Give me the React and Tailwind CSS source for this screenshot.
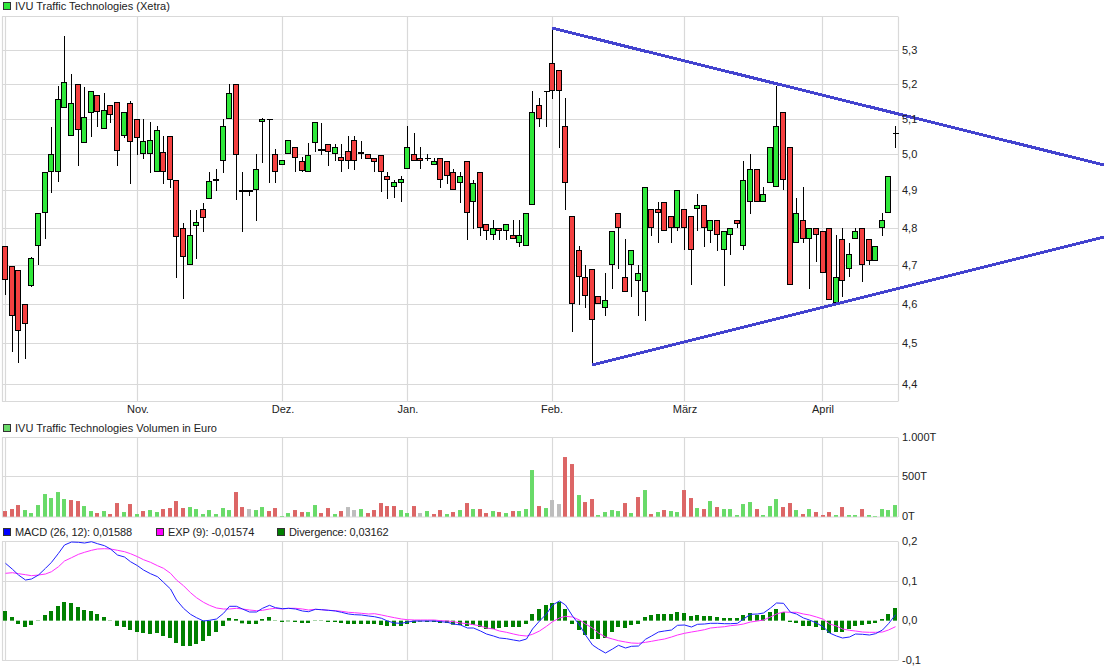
import React from 'react';

const xAt = (i) => Math.round(5 + i * 6.593);

const vGrid = [137.5, 282.5, 407.5, 552.5, 684.5, 822.5];
const months = [['Nov.', 138], ['Dez.', 283], ['Jan.', 408], ['Feb.', 552], ['März', 685], ['April', 823]];

// color, body top, body bottom, wick top, wick bottom (page pixels); d = doji with thick bar, c = thin cross
const candles = [
  ['r',246,280,246,295],['r',266,316,266,352],['r',270,331,270,363],['r',304,324,304,359],['g',258,286,257,287],
  ['g',213,246,213,265],['g',172,213,172,239],['g',154,172,127,193],['g',99,172,86,182],['g',82,108,36,108],
  ['g',103,136,74,136],['r',84,130,84,166],['g',117,143,87,143],['g',91,113,91,137],['r',95,112,95,127],
  ['g',110,129,93,129],['r',105,115,105,123],['r',102,151,102,166],['g',112,136,112,138],['r',103,142,101,184],
  ['r',119,138,119,155],['g',141,154,119,159],['g',140,154,122,173],['g',130,172,126,172],['r',152,172,136,184],
  ['r',136,180,136,188],['r',180,237,180,278],['r',228,257,223,299],['g',235,265,210,265],['g',222,226,210,259],
  ['r',209,218,203,232],['g',181,199,172,199],['g',179,181,169,191],['g',126,161,119,173],['g',93,119,84,119],
  ['r',84,155,84,200],['d',191,191,172,232],['d',191,191,191,196],['g',169,190,154,221],['g',119,122,118,163],
  ['c',119,119,119,183],['r',154,172,149,183],['g',160,165,160,165],['g',140,154,140,154],['r',147,158,147,172],
  ['r',161,171,157,172],['g',155,172,143,172],['g',122,143,122,152],['d',150,150,123,155],['r',144,152,144,166],
  ['g',147,154,144,161],['r',157,161,144,172],['r',151,161,136,169],['r',140,161,136,170],['g',152,154,141,159],
  ['r',154,159,154,159],['r',158,162,158,172],['r',155,172,155,192],['r',176,180,172,199],['g',182,187,180,198],
  ['g',179,183,176,202],['g',147,169,126,169],['r',154,161,133,161],['r',158,161,147,169],['c',158,158,154,161],
  ['g',161,165,158,165],['r',158,180,158,188],['r',161,176,161,184],['r',172,190,169,190],['g',176,183,172,203],
  ['r',161,213,161,240],['g',183,202,180,229],['r',172,228,172,236],['r',224,231,224,240],['g',228,235,220,240],
  ['r',228,231,228,240],['g',224,231,224,240],['r',235,239,220,239],['g',235,243,220,247],['g',213,246,213,246],
  ['g',112,205,91,205],['r',105,119,98,127],['c',91,91,91,127],['r',63,91,28,99],['r',70,91,70,148],
  ['r',126,183,98,210],['r',216,304,216,332],['r',250,277,246,305],['r',277,296,265,308],['r',269,320,269,365],
  ['r',296,304,296,304],['g',300,308,273,316],['g',231,265,231,289],['r',213,228,213,269],['r',277,292,239,292],
  ['g',250,265,250,297],['g',273,281,265,316],['g',187,292,187,321],['r',209,228,209,236],['r',209,213,202,243],
  ['r',202,231,202,231],['r',216,228,216,243],['g',190,228,190,231],['r',209,228,209,250],['r',216,250,216,285],
  ['g',205,209,194,231],['r',205,228,205,247],['g',220,231,220,243],['r',220,235,220,251],['g',231,250,231,286],
  ['g',228,235,228,255],['r',220,224,220,228],['g',180,246,161,250],['g',169,202,154,214],['r',169,202,169,202],
  ['g',194,202,187,202],['g',147,183,147,183],['g',126,187,86,187],['r',112,180,112,190],['r',147,285,147,285],
  ['g',213,243,198,243],['r',220,239,187,243],['g',228,239,228,289],['r',228,235,228,262],['r',231,273,231,273],
  ['r',228,300,228,300],['g',277,303,235,303],['r',239,281,228,297],['g',254,269,243,277],['g',231,239,228,239],
  ['r',228,265,228,282],['r',239,261,239,265],['g',246,261,246,261],['g',220,228,213,236],['g',176,213,176,213],
  ['c',133,133,126,148],
];

const volTops = [
  273,267,255,270,279,255,222,234,216,237,240,243,258,273,279,273,282,249,276,252,282,273,270,276,267,264,243,264,
  261,267,282,270,282,264,270,216,261,267,270,261,273,264,288,279,270,276,276,255,279,264,282,273,261,270,267,279,
  270,249,258,258,270,279,258,279,273,282,270,282,276,270,249,267,267,279,273,276,279,273,273,267,150,258,264,240,
  252,111,132,225,246,237,285,276,270,273,249,279,231,210,282,276,270,273,276,210,234,264,267,243,261,267,267,285,
  252,246,267,285,258,237,261,249,270,282,267,276,285,276,285,261,285,285,267,285,288,267,270,255,
];
const volColors =
  'rrrgggggggrrggrgrrgrgrggrrrrgggggggrrxggrrggrrggrrgrxxgr' +
  'rrrrggrxgrrgrgrgrrgrgrgggrgxxrrgrrggggrgrgrgrggrrgrgrggg' +
  'ggrgggrrgrgrrrgrggrggggg';
const volFill = { r: '#dc6666', g: '#69da69', x: '#bdbdbd' };

const divZ = [
  258,276,297,306,300,288,270,258,243,231,234,246,255,258,267,276,288,303,306,315,321,324,327,324,333,339,354,363,
  363,357,348,333,321,303,279,282,295,297,297,282,276,286,291,289,291,294,294,288,288,291,291,294,297,297,297,297,
  297,300,303,303,303,297,294,290,291,291,294,294,299,300,303,300,306,312,312,309,306,306,306,297,267,252,240,234,
  231,252,297,315,330,342,342,339,321,306,309,300,297,276,270,267,267,267,261,264,273,270,273,273,276,279,279,279,
  270,264,270,270,261,252,261,291,294,303,303,306,315,324,321,321,312,303,300,297,294,282,267,249,
];

const macdZ = [
  115,133,150,165,162,150,130,112,85,60,51,52,54,50,56,62,72,90,96,110,122,135,146,155,172,192,225,250,
  268,278,288,286,282,265,244,244,252,261,261,250,241,248,251,250,252,258,260,253,254,256,258,262,267,269,270,273,
  275,280,288,294,295,291,288,288,288,288,290,292,297,300,309,309,318,327,333,339,341,345,348,342,312,288,267,240,
  228,240,273,300,330,360,372,384,372,361,369,364,363,343,333,321,318,315,301,300,306,298,297,295,295,296,296,295,
  282,268,267,264,249,234,235,262,267,279,285,294,306,324,333,339,336,327,328,330,326,315,296,269,
];

const expZ = [
  145,143,146,149,152,150,147,140,125,108,98,88,82,76,72,71,72,76,80,86,95,104,112,122,130,145,165,182,
  203,218,232,241,249,252,252,250,252,255,257,256,252,250,252,250,250,252,255,253,254,256,257,259,262,263,265,267,
  266,270,274,278,282,284,285,285,285,285,287,288,290,294,296,299,303,309,312,318,322,327,331,333,328,318,304,290,
  279,274,276,285,297,309,324,336,342,347,351,354,355,352,349,345,342,336,330,325,321,318,314,309,307,305,302,300,
  297,291,288,285,276,267,261,262,262,267,270,276,283,297,303,312,316,318,321,322,322,321,315,305,
];

const zToY = (z) => 525 + z / 3;
const toPoints = (list) => list.map((z, i) => `${xAt(i) + 0.5},${zToY(z).toFixed(1)}`).join(' ');

function Grid({ top, bottom, rows }) {
  return (
    <g stroke="#d9d9d9" strokeWidth="1.2">
      {rows.map((y) => (
        <line key={y} x1="2" x2="898" y1={y + 0.5} y2={y + 0.5} />
      ))}
      {[2.5, 5.5, ...vGrid, 898.5].map((x) => (
        <line key={x} x1={x} x2={x} y1={top} y2={bottom} />
      ))}
      <line x1="2" x2="898" y1={top} y2={top} />
      <line x1="2" x2="898" y1={bottom} y2={bottom} />
    </g>
  );
}

function AxisLabels({ labels }) {
  return (
    <g fontSize="11" fill="#222">
      {labels.map(([text, y]) => (
        <text key={text} x="902" y={y + 4}>{text}</text>
      ))}
    </g>
  );
}

function Candle({ data, x }) {
  const [kind, top, bottom, wickTop, wickBottom] = data;
  const fill = kind === 'r' ? '#f44040' : '#2fe83a';
  return (
    <g>
      <line x1={x + 0.5} x2={x + 0.5} y1={wickTop} y2={wickBottom} stroke="#000" />
      {kind === 'd' && <rect x={x - 3} y={top - 1} width="7" height="2" fill="#000" />}
      {kind === 'c' && <rect x={x - 2} y={top} width="6" height="1" fill="#000" />}
      {(kind === 'r' || kind === 'g') && (
        <rect x={x - 2.5} y={top + 0.5} width="5" height={Math.max(bottom - top - 1, 1)} fill={fill} stroke="#000" />
      )}
    </g>
  );
}

function PriceChart() {
  const rows = [50, 84, 119, 154, 190, 228, 265, 304, 343, 384];
  const labels = ['5,3', '5,2', '5,1', '5,0', '4,9', '4,8', '4,7', '4,6', '4,5', '4,4'];
  return (
    <svg className="block" width="1104" height="404" viewBox="0 16 1104 404">
      <Grid top={16.5} bottom={401.5} rows={rows} />
      {candles.map((c, i) => (
        <Candle key={i} data={c} x={xAt(i)} />
      ))}
      <g stroke="#4343cf" strokeWidth="3" shapeRendering="crispEdges">
        <line x1="552" y1="28" x2="1104" y2="165" />
        <line x1="592" y1="365" x2="1104" y2="237" />
      </g>
      <AxisLabels labels={labels.map((t, i) => [t, rows[i]])} />
      <g fontSize="11" fill="#222" textAnchor="middle">
        {months.map(([m, x]) => (
          <text key={m} x={x} y="413">{m}</text>
        ))}
      </g>
    </svg>
  );
}

function VolumeChart() {
  return (
    <svg className="block overflow-visible" width="1104" height="88" viewBox="0 436 1104 88">
      <Grid top={437.5} bottom={517} rows={[476]} />
      {volTops.map((z, i) => {
        const h = (290 - z) / 3;
        return <rect key={i} x={xAt(i) - 2} y={516.7 - h} width="4" height={h} fill={volFill[volColors[i]]} />;
      })}
      <AxisLabels labels={[['1.000T', 437], ['500T', 476], ['0T', 516]]} />
    </svg>
  );
}

function MacdChart() {
  return (
    <svg className="block overflow-visible" width="1104" height="130" viewBox="0 540 1104 130">
      <Grid top={541.5} bottom={660.5} rows={[581]} />
      {divZ.map((z, i) => {
        const a = zToY(Math.min(z, 287));
        const b = zToY(Math.max(z, 287));
        return <rect key={i} x={xAt(i) - 2} y={a} width="4" height={b - a} fill="#008000" />;
      })}
      <polyline points={toPoints(expZ)} fill="none" stroke="#ff2eff" strokeWidth="1" />
      <polyline points={toPoints(macdZ)} fill="none" stroke="#2020ff" strokeWidth="1" />
      <AxisLabels labels={[['0,2', 541], ['0,1', 581], ['0,0', 620], ['-0,1', 660]]} />
    </svg>
  );
}

function LegendItem({ swatch, className, children }) {
  return (
    <div className={`flex items-center gap-1 ${className || ''}`}>
      <span className={`w-2 h-2 border border-[#333] ${swatch}`} />
      <span>{children}</span>
    </div>
  );
}

export default function App() {
  return (
    <div className="w-[1104px] h-[670px] bg-white overflow-hidden text-[11px] leading-none text-[#222] font-['Liberation_Sans',Arial,sans-serif]">
      <div className="h-4 pl-[3px] pb-[4px] flex items-center">
        <LegendItem swatch="bg-[#2fe83a]">IVU Traffic Technologies (Xetra)</LegendItem>
      </div>
      <PriceChart />
      <div className="h-4 pl-[3px] flex items-center">
        <LegendItem swatch="bg-[#69da69]">IVU Traffic Technologies Volumen in Euro</LegendItem>
      </div>
      <VolumeChart />
      <div className="h-4 pl-[3px] flex items-center tracking-[-0.1px]">
        <LegendItem className="w-[153px]" swatch="bg-[#0000ff]">MACD (26, 12): 0,01588</LegendItem>
        <LegendItem className="w-[121px]" swatch="bg-[#ff00ff]">EXP (9): -0,01574</LegendItem>
        <LegendItem swatch="bg-[#008000]">Divergence: 0,03162</LegendItem>
      </div>
      <MacdChart />
    </div>
  );
}
